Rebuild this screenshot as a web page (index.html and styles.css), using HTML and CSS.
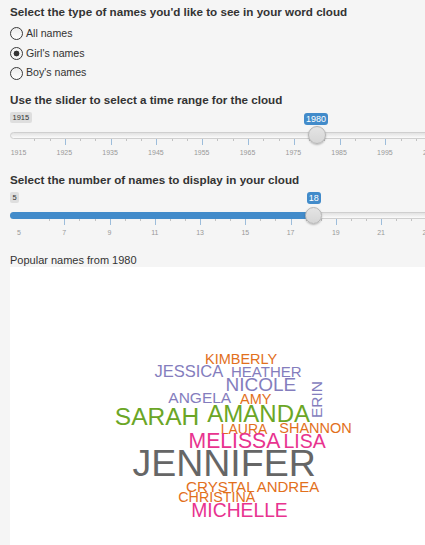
FILE: index.html
```html
<!DOCTYPE html>
<html>
<head>
<meta charset="utf-8">
<link rel="stylesheet" href="styles.css">
</head>
<body>
<div class="page">
  <div class="ctl-label title1">Select the type of names you'd like to see in your word cloud</div>
  <div class="radios">
    <label class="radio"><input type="radio" name="type"><span>All names</span></label>
    <label class="radio"><input type="radio" name="type" checked><span>Girl's names</span></label>
    <label class="radio"><input type="radio" name="type"><span>Boy's names</span></label>
  </div>

  <div class="ctl-label lbl2">Use the slider to select a time range for the cloud</div>
  <div class="slider">
    <div class="minrow"><span class="min">1915</span></div>
    <div class="track"></div>
    <div class="ticks ticks1">
      <span class="tk"></span><span class="tk"></span><span class="tk mj"></span>
      <span class="tk"></span><span class="tk"></span><span class="tk mj"></span>
      <span class="tk"></span><span class="tk"></span><span class="tk mj"></span>
      <span class="tk"></span><span class="tk"></span><span class="tk mj"></span>
      <span class="tk"></span><span class="tk"></span><span class="tk mj"></span>
      <span class="tk"></span><span class="tk"></span><span class="tk mj"></span>
      <span class="tk"></span><span class="tk"></span><span class="tk mj"></span>
      <span class="tk"></span><span class="tk"></span><span class="tk mj"></span>
      <span class="tk"></span><span class="tk"></span><span class="tk mj"></span>
      <span class="tk"></span><span class="tk"></span><span class="tk mj"></span>
    </div>
    <div class="ticklabels tl1">
      <span>1915</span><span>1925</span><span>1935</span><span>1945</span><span>1955</span><span>1965</span><span>1975</span><span>1985</span><span>1995</span><span>2005</span>
    </div>
    <span class="handle h1"></span>
    <span class="tip tip1">1980</span>
  </div>

  <div class="ctl-label lbl3">Select the number of names to display in your cloud</div>
  <div class="slider">
    <div class="minrow"><span class="min">5</span></div>
    <div class="track"><div class="bar"></div></div>
    <div class="ticks ticks2">
      <span class="tk"></span><span class="tk mj"></span>
      <span class="tk"></span><span class="tk"></span><span class="tk mj"></span>
      <span class="tk"></span><span class="tk"></span><span class="tk mj"></span>
      <span class="tk"></span><span class="tk"></span><span class="tk mj"></span>
      <span class="tk"></span><span class="tk"></span><span class="tk mj"></span>
      <span class="tk"></span><span class="tk"></span><span class="tk mj"></span>
      <span class="tk"></span><span class="tk"></span><span class="tk mj"></span>
      <span class="tk"></span><span class="tk"></span><span class="tk mj"></span>
      <span class="tk"></span><span class="tk"></span><span class="tk mj"></span>
      <span class="tk"></span><span class="tk"></span><span class="tk mj"></span>
    </div>
    <div class="ticklabels tl2">
      <span>5</span><span>7</span><span>9</span><span>11</span><span>13</span><span>15</span><span>17</span><span>19</span><span>21</span><span>23</span>
    </div>
    <span class="handle h2"></span>
    <span class="tip tip2">18</span>
  </div>

  <div class="popular">Popular names from 1980</div>
  <div class="cloud">
    <span class="w orange w-kimberly">KIMBERLY</span>
    <span class="w purple w-jessica">JESSICA</span>
    <span class="w purple w-heather">HEATHER</span>
    <span class="w purple w-nicole">NICOLE</span>
    <span class="w purple w-angela">ANGELA</span>
    <span class="w orange w-amy">AMY</span>
    <span class="w purple w-erin">ERIN</span>
    <span class="w green w-sarah">SARAH</span>
    <span class="w green w-amanda">AMANDA</span>
    <span class="w orange w-laura">LAURA</span>
    <span class="w orange w-shannon">SHANNON</span>
    <span class="w pink w-melissa">MELISSA</span>
    <span class="w pink w-lisa">LISA</span>
    <span class="w gray w-jennifer">JENNIFER</span>
    <span class="w orange w-crystal">CRYSTAL</span>
    <span class="w orange w-andrea">ANDREA</span>
    <span class="w orange w-christina">CHRISTINA</span>
    <span class="w pink w-michelle">MICHELLE</span>
  </div>
</div>
</body>
</html>
```

FILE: styles.css
```css
html, body {
  margin: 0;
  padding: 0;
  overflow: hidden;
  background: #f5f5f5;
  height: 545px;
}
body {
  font-family: "Liberation Sans", Arial, sans-serif;
  color: #333;
}
.page {
  padding: 0 0 0 10px;
  width: 470px;
}
.ctl-label {
  font-weight: bold;
  font-size: 11.65px;
  line-height: 14px;
  white-space: nowrap;
}
.title1 { padding-top: 5px; }
.radios {
  margin-top: 5px;
  display: flex;
  flex-direction: column;
}
.radio {
  height: 19.7px;
  display: flex;
  align-items: center;
  font-size: 10.6px;
  color: #333;
}
.radio span { margin-top: -2px; }
.radio input {
  -webkit-appearance: none;
  appearance: none;
  margin: 0 3px 0 0;
  width: 13px;
  height: 13px;
  border: 1px solid #3a3a3a;
  border-radius: 50%;
  background: linear-gradient(#ececec, #ffffff);
  box-sizing: border-box;
  position: relative;
  flex: none;
}
.radio input:checked {
  background: radial-gradient(circle, #333 0 2.6px, #f4f4f4 3.2px);
}
.lbl2 { margin-top: 9.9px; }
.lbl3 { margin-top: 16.3px; }

.slider {
  position: relative;
  height: 50px;
}
.minrow {
  display: flex;
  padding-top: 5.2px;
  height: 11px;
}
.min {
  height: 11px;
  line-height: 11.5px;
  font-size: 7.5px;
  padding: 0 2.5px;
  background: #dedede;
  border-radius: 2px;
  color: #333;
}
.track {
  margin-top: 8.7px;
  height: 7px;
  box-sizing: border-box;
  border: 1px solid #cfcfcf;
  border-radius: 4px;
  background: linear-gradient(#e2e2e2, #fbfbfb);
  position: relative;
}
.bar {
  position: absolute;
  left: -1px;
  top: -1px;
  height: 7px;
  width: 304px;
  background: #428bca;
  border-radius: 4px 0 0 4px;
}
.ticks {
  margin-top: -0.7px;
  height: 7px;
  display: flex;
  align-items: flex-start;
}
.tk {
  flex: none;
  height: 3px;
  box-sizing: border-box;
  border-left: 1px solid #c2c2c2;
}
.tk.mj {
  height: 7px;
  border-left-color: #9dbddb;
}
.ticks1 { margin-left: 24.3px; }
.ticks1 .tk { width: 15.267px; }
.ticks2 { margin-left: 39.3px; }
.ticks2 .tk { width: 15.083px; }

.ticklabels {
  margin-top: 3.6px;
  display: flex;
  font-size: 7px;
  line-height: 8px;
  color: #999;
}
.ticklabels span {
  flex: none;
  text-align: center;
}
.tl1 { margin-left: -14.4px; }
.tl1 span { width: 45.8px; }
.tl2 { margin-left: -13.6px; }
.tl2 span { width: 45.25px; }

.handle {
  position: absolute;
  border-radius: 50%;
  box-sizing: border-box;
  border: 1px solid #b5b5b5;
  background: linear-gradient(#e4e4e4, #d6d6d6);
  box-shadow: 0 1px 2px rgba(0,0,0,0.25);
}
.h1 { left: 297.7px; top: 19.2px; width: 18px; height: 18px; }
.h2 { left: 294.6px; top: 19.6px; width: 17.5px; height: 17.5px; }

.tip {
  position: absolute;
  background: #428bca;
  color: #fff;
  font-size: 9px;
  border-radius: 3px;
  text-align: center;
}
.tip1 { left: 294px; top: 5.9px; width: 24px; height: 12.3px; line-height: 12.5px; }
.tip2 { left: 296.7px; top: 4.6px; width: 14px; height: 12.6px; line-height: 13px; }

.popular {
  margin-top: 16.6px;
  font-size: 11px;
  line-height: 13px;
  color: #333;
}
.cloud {
  margin-top: 0.6px;
  position: relative;
  background: #fff;
  height: 300px;
}
.w {
  position: absolute;
  line-height: 1;
  white-space: nowrap;
  font-family: "Liberation Sans", Arial, sans-serif;
}
.orange { color: #e2701c; }
.purple { color: #847dbd; }
.green { color: #6ba626; }
.pink { color: #e8338f; }
.gray { color: #666666; }

.w-kimberly { font-size: 14.5px; left: 195px; top: 84.1px; }
.w-jessica { font-size: 16.5px; left: 144.5px; top: 95.7px; }
.w-heather { font-size: 15px; left: 221px; top: 96.7px; }
.w-nicole { font-size: 19px; left: 215.5px; top: 107.3px; }
.w-angela { font-size: 15.5px; left: 158.3px; top: 122.9px; }
.w-amy { font-size: 14.5px; left: 230px; top: 124.4px; }
.w-erin {
  font-size: 15.5px;
  left: 298.7px;
  top: 113.7px;
  writing-mode: vertical-rl;
  transform: rotate(180deg);
}
.w-sarah { font-size: 24.5px; left: 104.8px; top: 138px; }
.w-amanda { font-size: 24px; left: 197.3px; top: 134.1px; }
.w-laura { font-size: 14px; left: 210.7px; top: 154.2px; }
.w-shannon { font-size: 14.5px; left: 269.3px; top: 153.4px; }
.w-melissa { font-size: 21.2px; left: 178.5px; top: 163px; }
.w-lisa { font-size: 19.5px; left: 273.5px; top: 164.4px; }
.w-jennifer { font-size: 37.5px; left: 122.4px; top: 177.7px; }
.w-crystal { font-size: 15.2px; left: 176px; top: 211.6px; }
.w-andrea { font-size: 15px; left: 246.7px; top: 211.8px; }
.w-christina { font-size: 14.3px; left: 168.3px; top: 222.3px; }
.w-michelle { font-size: 19.3px; left: 181.3px; top: 233.7px; }
```
